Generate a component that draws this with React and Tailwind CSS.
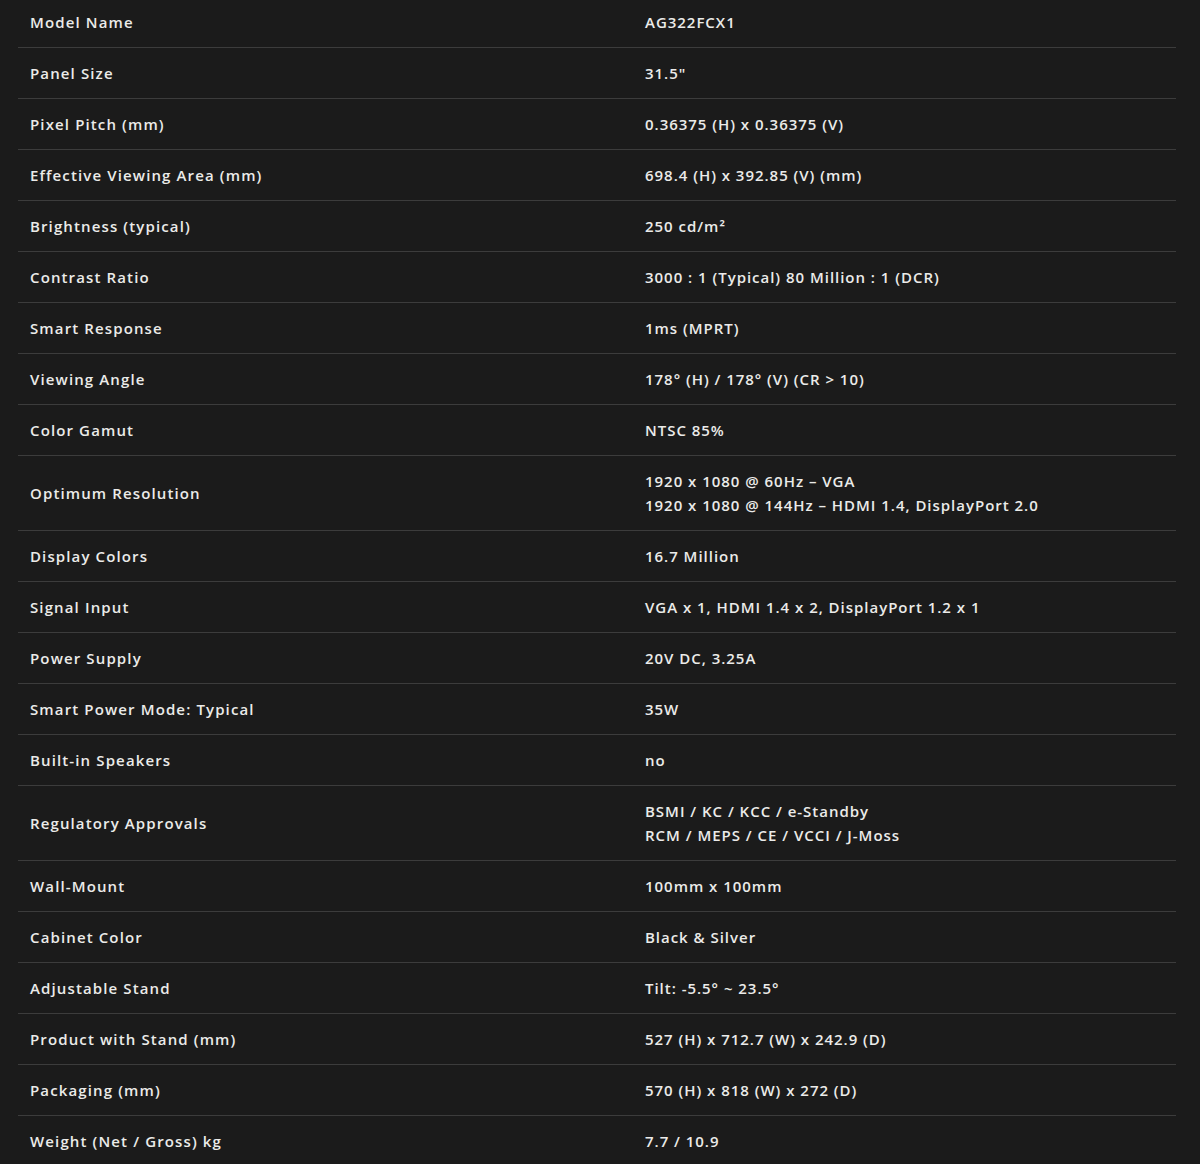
import React from 'react';

const specs = [
  ['Model Name', ['AG322FCX1']],
  ['Panel Size', ['31.5"']],
  ['Pixel Pitch (mm)', ['0.36375 (H) x 0.36375 (V)']],
  ['Effective Viewing Area (mm)', ['698.4 (H) x 392.85 (V) (mm)']],
  ['Brightness (typical)', ['250 cd/m²']],
  ['Contrast Ratio', ['3000 : 1 (Typical) 80 Million : 1 (DCR)']],
  ['Smart Response', ['1ms (MPRT)']],
  ['Viewing Angle', ['178° (H) / 178° (V) (CR > 10)']],
  ['Color Gamut', ['NTSC 85%']],
  ['Optimum Resolution', ['1920 x 1080 @ 60Hz – VGA', '1920 x 1080 @ 144Hz – HDMI 1.4, DisplayPort 2.0']],
  ['Display Colors', ['16.7 Million']],
  ['Signal Input', ['VGA x 1, HDMI 1.4 x 2, DisplayPort 1.2 x 1']],
  ['Power Supply', ['20V DC, 3.25A']],
  ['Smart Power Mode: Typical', ['35W']],
  ['Built-in Speakers', ['no']],
  ['Regulatory Approvals', ['BSMI / KC / KCC / e-Standby', 'RCM / MEPS / CE / VCCI / J-Moss']],
  ['Wall-Mount', ['100mm x 100mm']],
  ['Cabinet Color', ['Black & Silver']],
  ['Adjustable Stand', ['Tilt: -5.5° ~ 23.5°']],
  ['Product with Stand (mm)', ['527 (H) x 712.7 (W) x 242.9 (D)']],
  ['Packaging (mm)', ['570 (H) x 818 (W) x 272 (D)']],
  ['Weight (Net / Gross) kg', ['7.7 / 10.9']],
];

function SpecRow({ label, values, last }) {
  return (
    <div
      className={`grid grid-cols-[615px_1fr] items-center py-[13px] ${
        last ? '' : 'border-b border-[#3c3c3c]'
      }`}
    >
      <div className="pl-3 font-semibold tracking-[0.075em]">{label}</div>
      <div className="pl-3 font-semibold tracking-[0.065em]">
        {values.map((v, i) => (
          <div key={i}>{v}</div>
        ))}
      </div>
    </div>
  );
}

export default function App() {
  return (
    <div className="min-h-[1164px] bg-[#1b1b1b] overflow-hidden">
      <div
        className="ml-[18px] w-[1158px] -mt-[3px] text-[15px] leading-6 text-[#ebebe9]"
        style={{ fontFamily: '"Open Sans", "Liberation Sans", sans-serif' }}
      >
        {specs.map(([label, values], idx) => (
          <SpecRow key={label} label={label} values={values} last={idx === specs.length - 1} />
        ))}
      </div>
    </div>
  );
}
